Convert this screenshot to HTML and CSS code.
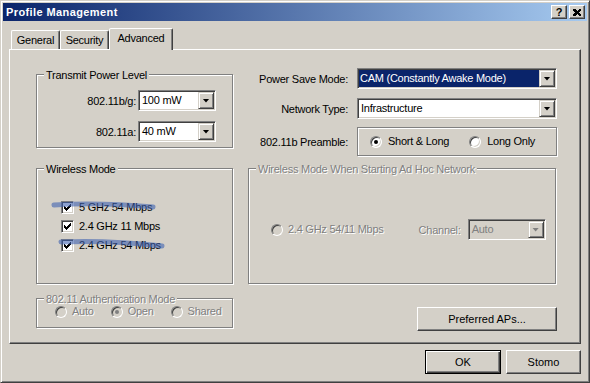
FILE: index.html
```html
<!DOCTYPE html>
<html lang="en">
<head>
    <meta charset="UTF-8">
    <title>Profile Management</title>
    <link rel="stylesheet" href="styles.css">
</head>
<body>
    <div class="window">
        <div class="titlebar">
            <span class="title">Profile Management</span>
            <div class="title-buttons">
                <span class="title-btn">?</span>
                <span class="title-btn">
                    <svg width="8" height="7" viewBox="0 0 8 7" shape-rendering="crispEdges"><path d="M0 0h2l2 2 2-2h2v1l-2 2.5 2 2.5v1h-2l-2-2-2 2h-2v-1l2-2.5-2-2.5z" fill="#000"/></svg>
                </span>
            </div>
        </div>

        <div class="dialog">
            <div class="tabs">
                <div class="tab tab-general">General</div>
                <div class="tab tab-security">Security</div>
                <div class="tab tab-advanced active">Advanced</div>
            </div>

            <div class="panel">
                <!-- row 1 -->
                <div class="group transmit">
                    <span class="legend">Transmit Power Level</span>
                    <div class="power-grid">
                        <span class="label">802.11b/g:</span>
                        <div class="combo"><span class="combo-value">100 mW</span><span class="combo-arrow"></span></div>
                        <span class="label">802.11a:</span>
                        <div class="combo"><span class="combo-value">40 mW</span><span class="combo-arrow"></span></div>
                    </div>
                </div>

                <div class="settings">
                    <span class="label">Power Save Mode:</span>
                    <div class="combo"><span class="combo-value selected">CAM (Constantly Awake Mode)</span><span class="combo-arrow"></span></div>
                    <span class="label">Network Type:</span>
                    <div class="combo"><span class="combo-value">Infrastructure</span><span class="combo-arrow"></span></div>
                    <span class="label">802.11b Preamble:</span>
                    <div class="preamble">
                        <span class="option"><span class="radio checked"></span>Short &amp; Long</span>
                        <span class="option"><span class="radio"></span>Long Only</span>
                    </div>
                </div>

                <!-- row 2 -->
                <div class="group wireless">
                    <span class="legend">Wireless Mode</span>
                    <div class="check-list">
                        <div class="option"><span class="check"><svg width="7" height="7" viewBox="0 0 7 7" shape-rendering="crispEdges"><path d="M6 0h1v3h-1v1h-1v1h-1v1h-1v1h-1v-1h-1v-1h-1v-3h1v1h1v1h1v-1h1v-1h1z" fill="#000"/></svg></span>5 GHz 54 Mbps</div>
                        <div class="option"><span class="check"><svg width="7" height="7" viewBox="0 0 7 7" shape-rendering="crispEdges"><path d="M6 0h1v3h-1v1h-1v1h-1v1h-1v1h-1v-1h-1v-1h-1v-3h1v1h1v1h1v-1h1v-1h1z" fill="#000"/></svg></span>2.4 GHz 11 Mbps</div>
                        <div class="option"><span class="check"><svg width="7" height="7" viewBox="0 0 7 7" shape-rendering="crispEdges"><path d="M6 0h1v3h-1v1h-1v1h-1v1h-1v1h-1v-1h-1v-1h-1v-3h1v1h1v1h1v-1h1v-1h1z" fill="#000"/></svg></span>2.4 GHz 54 Mbps</div>
                    </div>
                    <svg class="scribble" width="195" height="114" viewBox="0 0 195 114">
                        <path d="M17 36 Q 60 33 116 38" />
                        <path d="M24 73 Q 70 71 125 77" />
                    </svg>
                </div>

                <div class="group adhoc disabled">
                    <span class="legend">Wireless Mode When Starting Ad Hoc Network</span>
                    <div class="adhoc-row">
                        <span class="option"><span class="radio"></span>2.4 GHz 54/11 Mbps</span>
                        <span class="channel-label">Channel:</span>
                        <div class="combo combo-disabled"><span class="combo-value">Auto</span><span class="combo-arrow"></span></div>
                    </div>
                </div>

                <!-- row 3 -->
                <div class="group auth disabled">
                    <span class="legend">802.11 Authentication Mode</span>
                    <div class="auth-row">
                        <span class="option"><span class="radio"></span>Auto</span>
                        <span class="option"><span class="radio checked"></span>Open</span>
                        <span class="option"><span class="radio"></span>Shared</span>
                    </div>
                </div>

                <button class="btn btn-preferred">Preferred APs...</button>
            </div>

            <div class="footer">
                <button class="btn btn-default">OK</button>
                <button class="btn">Stomo</button>
            </div>
        </div>
    </div>
</body>
</html>
```

FILE: styles.css
```css
* {
    box-sizing: border-box;
    margin: 0;
    padding: 0;
}
body {
    font-family: "Liberation Sans", Arial, sans-serif;
    font-size: 11px;
    letter-spacing: -0.25px;
    color: #000;
    background: #d4d0c8;
}
.window {
    width: 590px;
    height: 383px;
    padding: 2px;
    background: #d4d0c8;
    border: 1px solid;
    border-color: #d4d0c8 #404040 #404040 #d4d0c8;
    box-shadow: inset 1px 1px #fff, inset -1px -1px #808080;
}

/* title bar */
.titlebar {
    height: 18px;
    display: flex;
    align-items: center;
    justify-content: space-between;
    padding: 0 2px 0 3px;
    background: linear-gradient(to right, #0a246a, #a6caf0);
}
.title {
    color: #fff;
    font-weight: bold;
    letter-spacing: 0.4px;
    line-height: 13px;
}
.title-buttons {
    display: flex;
    gap: 2px;
}
.title-btn {
    width: 16px;
    height: 14px;
    display: flex;
    align-items: center;
    justify-content: center;
    background: #d4d0c8;
    border: 1px solid;
    border-color: #fff #404040 #404040 #fff;
    box-shadow: inset -1px -1px #808080;
    font-weight: bold;
    font-size: 11px;
    line-height: 12px;
    letter-spacing: 0;
}

/* tabs */
.dialog {
    padding: 7px 6px 0;
}
.tabs {
    display: flex;
    align-items: flex-end;
    height: 21px;
    padding-left: 2px;
}
.tab {
    height: 19px;
    padding-top: 2px;
    line-height: 14px;
    text-align: center;
    border: 1px solid;
    border-bottom: 0;
    border-color: #fff #404040 transparent #fff;
    border-radius: 2px 2px 0 0;
    box-shadow: inset -1px 0 #808080;
}
.tab-general { width: 49px; }
.tab-security { width: 49px; }
.tab-advanced { width: 64px; }
.tab.active {
    height: 22px;
    margin-bottom: -1px;
    position: relative;
    z-index: 1;
    background: #d4d0c8;
}
.panel {
    height: 295px;
    display: grid;
    grid-template-columns: 197px 309px;
    grid-template-rows: 100px 130px auto;
    column-gap: 15px;
    align-items: start;
    padding: 18px 0 0 26px;
    border: 1px solid;
    border-color: #fff #404040 #404040 #fff;
    box-shadow: inset -1px -1px #808080;
}

/* group boxes */
.group {
    position: relative;
    border: 1px solid #808080;
    box-shadow: inset 1px 1px #fff, 1px 1px #fff;
}
.legend {
    position: absolute;
    top: -6px;
    left: 7px;
    padding: 0 2px;
    line-height: 13px;
    white-space: nowrap;
    background: #d4d0c8;
}
.disabled .legend,
.disabled .option,
.disabled .channel-label {
    color: #808080;
    text-shadow: 1px 1px 0 #fff;
}
.label {
    text-align: right;
    white-space: nowrap;
}

.transmit {
    margin-top: 6px;
    height: 74px;
}
.power-grid {
    display: grid;
    grid-template-columns: 99px 78px;
    column-gap: 2px;
    row-gap: 10px;
    align-items: center;
    padding-top: 15px;
}

.settings {
    display: grid;
    grid-template-columns: 100px 200px;
    column-gap: 9px;
    align-items: center;
}
.settings .combo:nth-of-type(2) {
    margin-top: 9px;
}
.settings .label:nth-of-type(2) {
    margin-top: 9px;
}
.settings .label:nth-of-type(3),
.preamble {
    margin-top: 8px;
}
.preamble {
    height: 29px;
    display: flex;
    align-items: center;
    gap: 20px;
    padding-left: 12px;
    border: 1px solid #808080;
    box-shadow: inset 1px 1px #fff, 1px 1px #fff;
}

/* combo boxes */
.combo {
    height: 21px;
    display: flex;
    padding: 1px;
    background: #fff;
    border: 1px solid;
    border-color: #808080 #fff #fff #808080;
    box-shadow: inset 1px 1px #404040, inset -1px -1px #d4d0c8;
}
.combo-value {
    flex: 1;
    height: 17px;
    line-height: 17px;
    padding-left: 2px;
    white-space: nowrap;
    overflow: hidden;
}
.combo-value.selected {
    background: #0a246a;
    color: #fff;
    padding-left: 1px;
}
.combo-arrow {
    width: 16px;
    height: 17px;
    display: flex;
    align-items: center;
    justify-content: center;
    background: #d4d0c8;
    border: 1px solid;
    border-color: #d4d0c8 #404040 #404040 #d4d0c8;
    box-shadow: inset 1px 1px #fff, inset -1px -1px #808080;
}
.combo-arrow::after {
    content: "";
    width: 7px;
    height: 4px;
    background: #000;
    clip-path: polygon(0 0, 100% 0, 50% 100%);
}
.combo-disabled,
.combo-disabled .combo-value {
    background: #d4d0c8;
    color: #808080;
}
.combo-disabled .combo-arrow::after {
    background: #808080;
}

/* radios and checkboxes */
.option {
    display: flex;
    align-items: center;
    gap: 5px;
    white-space: nowrap;
    line-height: 13px;
}
.radio {
    position: relative;
    width: 12px;
    height: 12px;
    border-radius: 50%;
    background: #fff;
    border: 1px solid;
    border-color: #808080 #fff #fff #808080;
    box-shadow: inset 1px 1px #404040, inset -1px -1px #d4d0c8;
    flex: none;
}
.radio.checked::after {
    content: "";
    position: absolute;
    left: 3px;
    top: 3px;
    width: 4px;
    height: 4px;
    border-radius: 50%;
    background: #000;
}
.disabled .radio {
    background: #d4d0c8;
}
.disabled .radio.checked::after {
    background: #808080;
}
.preamble .option {
    gap: 6px;
}
.check {
    width: 13px;
    height: 13px;
    display: flex;
    align-items: center;
    justify-content: center;
    background: #fff;
    border: 1px solid;
    border-color: #808080 #fff #fff #808080;
    box-shadow: inset 1px 1px #404040, inset -1px -1px #d4d0c8;
    flex: none;
}

.wireless {
    height: 116px;
}
.check-list {
    display: flex;
    flex-direction: column;
    gap: 6px;
    padding: 32px 0 0 24px;
}
.scribble {
    position: absolute;
    left: 0;
    top: 0;
    pointer-events: none;
}
.scribble path {
    fill: none;
    stroke: #3f63b0;
    stroke-opacity: 0.6;
    stroke-width: 5;
    stroke-linecap: round;
}

.adhoc {
    width: 308px;
    height: 116px;
}
.adhoc-row {
    display: flex;
    align-items: center;
    margin-top: 50px;
    padding-left: 22px;
}
.channel-label {
    margin: 0 7px 0 35px;
}
.adhoc .combo {
    width: 78px;
}

.auth {
    height: 30px;
}
.auth-row {
    display: flex;
    gap: 17px;
    padding: 6px 0 0 18px;
}

/* buttons */
.btn {
    height: 24px;
    font: inherit;
    color: #000;
    background: #d4d0c8;
    border: 1px solid;
    border-color: #fff #404040 #404040 #fff;
    box-shadow: inset -1px -1px #808080;
    text-align: center;
}
.btn-preferred {
    width: 140px;
    margin-top: 9px;
    justify-self: end;
}
.footer {
    display: flex;
    justify-content: flex-end;
    gap: 5px;
    margin-top: 6px;
}
.footer .btn {
    width: 75px;
}
.footer .btn-default {
    width: 76px;
    border-color: #000;
    box-shadow: inset 1px 1px #fff, inset -1px -1px #404040, inset -2px -2px #808080;
}
```
